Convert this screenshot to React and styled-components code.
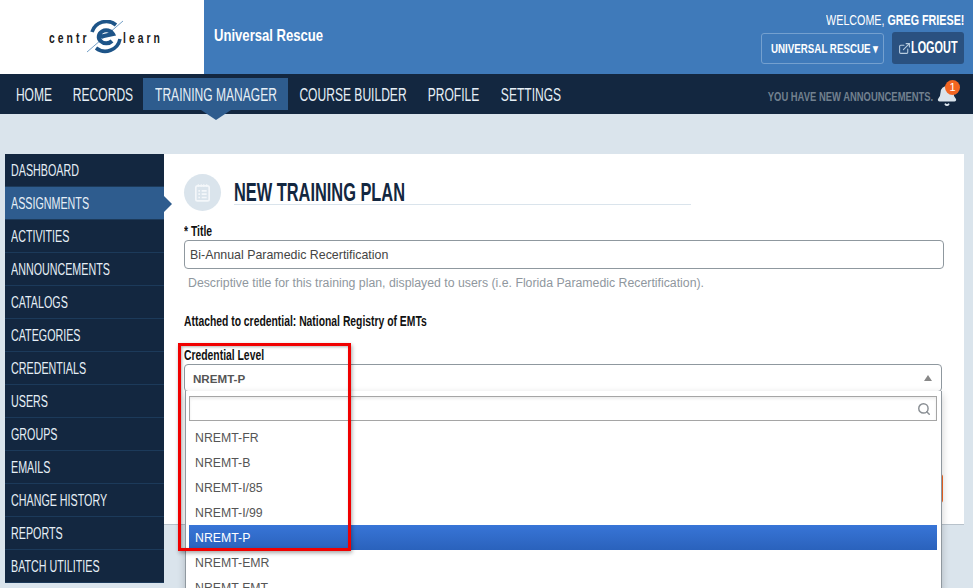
import styled, { createGlobalStyle } from 'styled-components';
import { Bell, ExternalLink, Search } from 'lucide-react';

const GlobalStyle = createGlobalStyle`
html, body {
  margin: 0;
  height: 100%;
  overflow: hidden;
  background: #dae4ec;
  font-family: "Liberation Sans", Arial, sans-serif;
}
* { box-sizing: border-box; }
`

const navItems = [
    { label: 'HOME', width: 58 },
    { label: 'RECORDS', width: 80 },
    { label: 'TRAINING MANAGER', width: 145 },
    { label: 'COURSE BUILDER', width: 130 },
    { label: 'PROFILE', width: 72 },
    { label: 'SETTINGS', width: 81 },
];
const sideItems = ['DASHBOARD', 'ASSIGNMENTS', 'ACTIVITIES', 'ANNOUNCEMENTS', 'CATALOGS', 'CATEGORIES', 'CREDENTIALS', 'USERS', 'GROUPS', 'EMAILS', 'CHANGE HISTORY', 'REPORTS', 'BATCH UTILITIES'];
const options = ['NREMT-FR', 'NREMT-B', 'NREMT-I/85', 'NREMT-I/99', 'NREMT-P', 'NREMT-EMR', 'NREMT-EMT'];

const App = () => {
    return (
        <Page>
            <GlobalStyle />
            <Header>
                <LogoBox>
                    <LogoText $width={38}>centr</LogoText>
                    <svg width="36" height="34" viewBox="0 0 36 34">
                        <path d="M5 12 A15 15 0 0 1 29 5" fill="none" stroke="#1d5488" strokeWidth="3.6" />
                        <path d="M33 19 A15 15 0 0 1 9 28" fill="none" stroke="#1d5488" strokeWidth="3.6" />
                        <path d="M0 32 L36 1" stroke="#4f86b8" strokeWidth="0.8" />
                        <path d="M12 17 L26 14 A7.5 6.5 0 1 0 25 21" fill="none" stroke="#1d5488" strokeWidth="4" />
                    </svg>
                    <LogoText $width={37}>learn</LogoText>
                </LogoBox>
                <BrandBar>
                    <BrandName>Universal Rescue</BrandName>
                    <UserBox>
                        <Welcome>WELCOME, <strong>GREG FRIESE!</strong></Welcome>
                        <UserActions>
                            <OrgButton><OrgLabel>UNIVERSAL RESCUE ▾</OrgLabel></OrgButton>
                            <LogoutButton>
                                <LogoutIcon size={13} color="#b9cde0" />
                                <LogoutLabel>LOGOUT</LogoutLabel>
                            </LogoutButton>
                        </UserActions>
                    </UserBox>
                </BrandBar>
            </Header>
            <Nav>
                {navItems.map((item) => (
                    <NavItem key={item.label} $width={item.width} $active={item.label === 'TRAINING MANAGER'}>
                        <NavLabel>{item.label}</NavLabel>
                    </NavItem>
                ))}
                <Announce>
                    <AnnounceText>YOU HAVE NEW ANNOUNCEMENTS.</AnnounceText>
                    <BellWrap>
                        <Bell size={22} color="#dae4ec" fill="#dae4ec" />
                        <Badge>1</Badge>
                    </BellWrap>
                </Announce>
            </Nav>
            <Content>
                <Sidebar>
                    {sideItems.map((item) => (
                        <SideItem key={item} $active={item === 'ASSIGNMENTS'}>
                            <SideLabel>{item}</SideLabel>
                        </SideItem>
                    ))}
                </Sidebar>
                <Panel>
                    <TitleRow>
                        <IconCircle>
                            <svg width="15" height="19" viewBox="0 0 18 22" fill="none" stroke="#f4f7fa">
                                <rect x="1" y="3" width="16" height="18" rx="2" strokeWidth="2" />
                                <path d="M4 1v3M7.5 1v3M10.5 1v3M14 1v3" strokeWidth="1.5" />
                                <path d="M4 9h2M8 9h6M4 13h2M8 13h6M4 17h2M8 17h6" strokeWidth="2" />
                            </svg>
                        </IconCircle>
                        <Heading><HeadingText>NEW TRAINING PLAN</HeadingText></Heading>
                    </TitleRow>
                    <Label><LabelText>* Title</LabelText></Label>
                    <TextInput readOnly value="Bi-Annual Paramedic Recertification" />
                    <Help>Descriptive title for this training plan, displayed to users (i.e. Florida Paramedic Recertification).</Help>
                    <Attached><LabelText>Attached to credential: National Registry of EMTs</LabelText></Attached>
                    <Label><LabelText>Credential Level</LabelText></Label>
                    <SelectWrap>
                        <SelectBox>NREMT-P<Caret /></SelectBox>
                        <Dropdown>
                            <SearchBox>
                                <Search size={14} color="#8a8f94" strokeWidth={2.5} />
                            </SearchBox>
                            {options.map((option) => (
                                <Option key={option} $selected={option === 'NREMT-P'}>{option}</Option>
                            ))}
                        </Dropdown>
                        <Highlight />
                    </SelectWrap>
                    <SaveRow>
                        <SaveButton />
                    </SaveRow>
                </Panel>
            </Content>
        </Page>
    )
}

// no condensed font is installed, so the condensed labels are squeezed horizontally
const Narrow = styled.span`
display: inline-block;
white-space: nowrap;
transform-origin: left center;
`

const Page = styled.div`
width: 973px;
height: 588px;
overflow: hidden;
`

const Header = styled.div`
height: 74px;
display: flex;
`

const LogoBox = styled.div`
width: 204px;
background-color: white;
display: flex;
align-items: center;
padding-left: 49px;
`

const LogoText = styled.span`
display: block;
width: ${(p) => p.$width}px;
font-size: 15px;
font-weight: bold;
letter-spacing: 4.4px;
color: #1b1b1b;
white-space: nowrap;
transform: scaleX(0.69);
transform-origin: left center;
`

const BrandBar = styled.div`
flex: 1;
background-color: #3f7aba;
display: flex;
justify-content: space-between;
padding: 11px 9px 0 10px;
`

const BrandName = styled(Narrow)`
height: 20px;
font-size: 17px;
font-weight: bold;
color: white;
margin-top: 15px;
transform: scaleX(0.77);
`

const UserBox = styled.div`
display: flex;
flex-direction: column;
align-items: flex-end;
gap: 3px;
`

const Welcome = styled(Narrow)`
font-size: 15px;
line-height: 18px;
color: white;
transform: scaleX(0.715);
transform-origin: right center;
`

const UserActions = styled.div`
display: flex;
gap: 8px;
`

const OrgButton = styled.div`
width: 123px;
height: 31px;
margin-top: 1px;
padding-left: 9px;
border: 1px solid #74a0cf;
border-radius: 3px;
display: flex;
align-items: center;
overflow: hidden;
`

const OrgLabel = styled(Narrow)`
font-size: 13px;
font-weight: bold;
color: white;
transform: scaleX(0.75);
`

const LogoutButton = styled.div`
width: 72px;
height: 32px;
padding-left: 6px;
background-color: #2a5180;
border-radius: 3px;
display: flex;
align-items: center;
overflow: hidden;
`

const LogoutIcon = styled(ExternalLink)`
flex-shrink: 0;
`

const LogoutLabel = styled(Narrow)`
flex-shrink: 0;
font-size: 16px;
font-weight: bold;
color: white;
transform: scaleX(0.68);
`

const Nav = styled.div`
height: 40px;
background-color: #132740;
display: flex;
padding: 4px 9px 0 5px;
`

const NavItem = styled.div`
position: relative;
width: ${(p) => p.$width}px;
height: 32px;
padding-top: 3px;
display: flex;
align-items: center;
justify-content: center;
background-color: ${(p) => (p.$active ? '#2e5c8e' : 'transparent')};

&::after {
    content: '';
    display: ${(p) => (p.$active ? 'block' : 'none')};
    position: absolute;
    left: 50%;
    top: 32px;
    margin-left: -15px;
    border-left: 15px solid transparent;
    border-right: 15px solid transparent;
    border-top: 10px solid #2e5c8e;
}
`

const NavLabel = styled(Narrow)`
font-size: 18px;
color: #e6eff6;
transform: scaleX(0.67);
transform-origin: center;
`

const Announce = styled.div`
margin-left: auto;
height: 36px;
display: flex;
align-items: center;
gap: 3px;
padding-right: 6px;
`

const AnnounceText = styled(Narrow)`
font-size: 13px;
font-weight: bold;
color: #72818f;
transform: scaleX(0.725);
transform-origin: right center;
`

const BellWrap = styled.div`
position: relative;
display: flex;
`

const Badge = styled.div`
position: absolute;
top: -5px;
left: 9px;
width: 15px;
height: 15px;
border-radius: 50%;
background-color: #f26522;
color: white;
font-size: 11px;
line-height: 15px;
text-align: center;
`

const Content = styled.div`
display: flex;
padding: 40px 9px 0 5px;
align-items: flex-start;
`

const Sidebar = styled.div`
width: 159px;
background-color: #132740;
flex-shrink: 0;
`

const SideItem = styled.div`
position: relative;
height: 33px;
padding: 1px 0 0 6px;
display: flex;
align-items: center;
border-bottom: 1px solid #1c3a5a;
background-color: ${(p) => (p.$active ? '#2e5c8e' : 'transparent')};

&::after {
    content: '';
    display: ${(p) => (p.$active ? 'block' : 'none')};
    position: absolute;
    left: 100%;
    top: 9px;
    border-top: 8px solid transparent;
    border-bottom: 8px solid transparent;
    border-left: 8px solid #2e5c8e;
}
`

const SideLabel = styled(Narrow)`
font-size: 16px;
color: #e6eff6;
transform: scaleX(0.67);
`

const Panel = styled.div`
flex: 1;
height: 371px;
background-color: white;
border-bottom: 1px solid #b8c2cb;
padding: 20px 20px 0 20px;
`

const TitleRow = styled.div`
display: flex;
align-items: flex-start;
gap: 13px;
height: 49px;
`

const IconCircle = styled.div`
width: 37px;
height: 37px;
border-radius: 50%;
background-color: #dae4ec;
display: flex;
align-items: center;
justify-content: center;
`

const Heading = styled.h1`
width: 457px;
height: 31px;
margin: 0;
border-bottom: 1px solid #dae4ec;
font-size: 25px;
line-height: 37px;
font-weight: bold;
color: #132740;
`

const HeadingText = styled(Narrow)`
transform: scaleX(0.655);
`

const Label = styled.div`
font-size: 14px;
line-height: 16px;
font-weight: bold;
color: #111;
`

const LabelText = styled(Narrow)`
transform: scaleX(0.74);
`

const TextInput = styled.input`
display: block;
width: 760px;
height: 29px;
margin-top: 1px;
padding: 0 5px;
border: 1px solid #8f989f;
border-radius: 4px;
font-family: "Liberation Sans", sans-serif;
font-size: 12.4px;
color: #444;
outline: none;
`

const Help = styled.div`
margin-top: 6px;
padding-left: 4px;
font-size: 12.3px;
line-height: 16px;
color: #8f979e;
`

const Attached = styled.div`
margin-top: 22px;
margin-bottom: 18px;
font-size: 14px;
line-height: 16px;
font-weight: bold;
color: #111;
`

const SelectWrap = styled.div`
position: relative;
width: 758px;
margin-top: 1px;
`

const SelectBox = styled.div`
position: relative;
height: 28px;
padding-left: 8px;
display: flex;
align-items: center;
border: 1px solid #8f989f;
border-radius: 4px;
font-size: 11.6px;
font-weight: bold;
color: #555;
`

const Caret = styled.span`
position: absolute;
right: 9px;
top: 10px;
border-left: 4px solid transparent;
border-right: 4px solid transparent;
border-bottom: 6px solid #888;
`

const Dropdown = styled.div`
position: absolute;
z-index: 2;
top: 27px;
left: 1px;
width: 757px;
height: 230px;
padding: 5px 4px 0 3px;
background-color: white;
border-left: 1px solid #8f989f;
border-right: 1px solid #8f989f;
box-shadow: 0 3px 8px rgba(0, 0, 0, 0.2);
`

const SearchBox = styled.div`
height: 25px;
margin-bottom: 4px;
padding-right: 5px;
display: flex;
align-items: center;
justify-content: flex-end;
border: 1px solid #a5a5a5;
box-shadow: inset 0 2px 3px rgba(0, 0, 0, 0.08);
`

const Option = styled.div`
height: 25px;
padding-left: 6px;
display: flex;
align-items: center;
font-size: 12.3px;
color: ${(p) => (p.$selected ? 'white' : '#555')};
background: ${(p) => (p.$selected ? 'linear-gradient(#3875d7, #2a62bc)' : 'transparent')};
`

const Highlight = styled.div`
position: absolute;
z-index: 3;
top: -21px;
left: -6px;
width: 173px;
height: 208px;
border: 3px solid #f00000;
box-shadow: 1px 2px 4px rgba(0, 0, 0, 0.35), inset 1px 1px 3px rgba(0, 0, 0, 0.3);
`

const SaveRow = styled.div`
display: flex;
justify-content: flex-end;
width: 759px;
margin-top: 82px;
`

const SaveButton = styled.div`
width: 60px;
height: 29px;
background-color: #f26522;
border-radius: 3px;
`

export default App;
